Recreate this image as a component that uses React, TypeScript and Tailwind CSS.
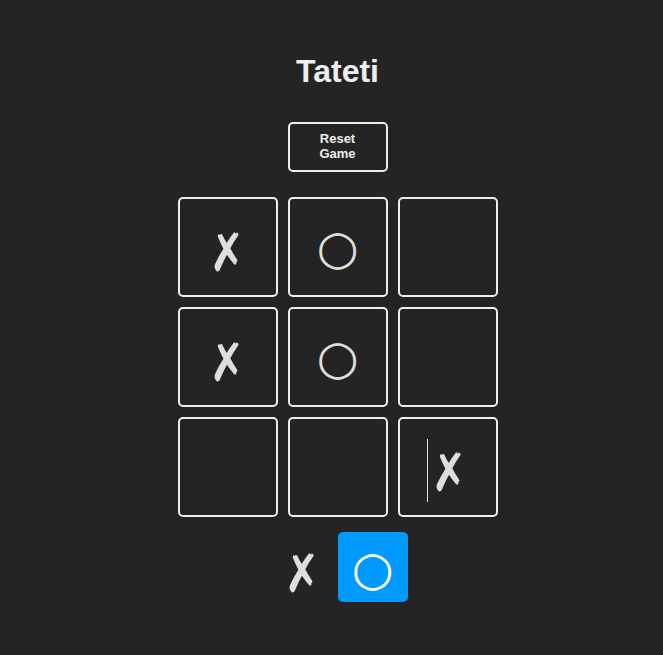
import React from 'react';

const board = ['✗', '○', '', '✗', '○', '', '', '', '✗'];

const Mark = ({ v }: { v: string }) =>
  v === '✗' ? (
    <span className="inline-block skew-x-[8deg] scale-y-110 translate-y-[5px]">{v}</span>
  ) : (
    <span className="inline-block">{v}</span>
  );

const Square = ({ value, last }: { value: string; last?: boolean }) => (
  <div
    className="w-[100px] h-[100px] border-2 border-[#eeeeee] rounded-[5px] grid place-items-center text-[48px] text-[#dedede]"
    style={{ fontFamily: '"DejaVu Sans", sans-serif' }}
  >
    {last ? (
      <span className="flex items-center">
        <span className="w-px h-[63px] bg-[#dedede] mr-[3px] translate-x-[2px] translate-y-[3px]" />
        <Mark v={value} />
      </span>
    ) : (
      value && <Mark v={value} />
    )}
  </div>
);

export default function App() {
  return (
    <div
      className="min-h-[655px] w-full bg-[#242424] text-[#dedede] flex justify-center pl-3"
      style={{ fontFamily: '"Liberation Sans", "DejaVu Sans", sans-serif' }}
    >
      <main className="flex flex-col items-center pt-[40px] w-fit">
        <h1 className="text-[32px] font-bold text-[#eeeeee] leading-[1.1] mt-[14px] mb-[16px]">Tateti</h1>
        <button className="w-[100px] h-[50px] border-2 border-[#eeeeee] rounded-[5px] text-[13px] font-bold text-[#eeeeee] leading-[1.15] px-6 mt-[17px] mb-[25px]">
          Reset Game
        </button>
        <section className="grid grid-cols-3 gap-[10px]">
          {board.map((v, i) => (
            <Square key={i} value={v} last={i === 8} />
          ))}
        </section>
        <section className="flex mt-[15px]" style={{ fontFamily: '"DejaVu Sans", sans-serif' }}>
          <div className="w-[70px] h-[70px] rounded-[5px] grid place-items-center text-[48px] text-[#dedede]">
            <Mark v="✗" />
          </div>
          <div className="w-[70px] h-[70px] rounded-[5px] grid place-items-center text-[48px] text-white bg-[#0099ff]">
            <Mark v="○" />
          </div>
        </section>
      </main>
    </div>
  );
}
